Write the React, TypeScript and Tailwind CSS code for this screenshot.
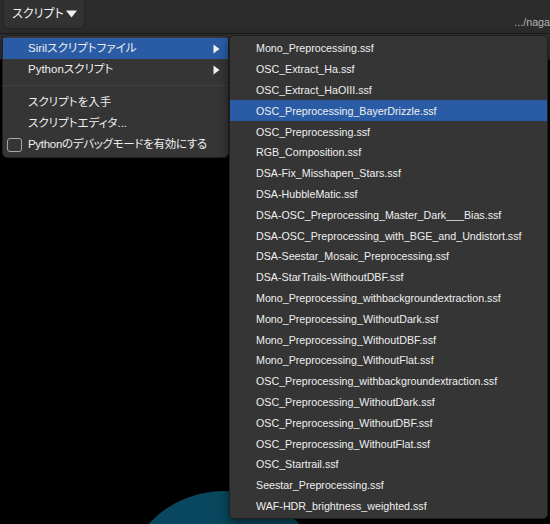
import React from "react";

const FONT = "font-['Liberation_Sans','Noto_Sans_CJK_JP',sans-serif] [font-feature-settings:'palt']";

const scripts = [
  "Mono_Preprocessing.ssf",
  "OSC_Extract_Ha.ssf",
  "OSC_Extract_HaOIII.ssf",
  "OSC_Preprocessing_BayerDrizzle.ssf",
  "OSC_Preprocessing.ssf",
  "RGB_Composition.ssf",
  "DSA-Fix_Misshapen_Stars.ssf",
  "DSA-HubbleMatic.ssf",
  "DSA-OSC_Preprocessing_Master_Dark___Bias.ssf",
  "DSA-OSC_Preprocessing_with_BGE_and_Undistort.ssf",
  "DSA-Seestar_Mosaic_Preprocessing.ssf",
  "DSA-StarTrails-WithoutDBF.ssf",
  "Mono_Preprocessing_withbackgroundextraction.ssf",
  "Mono_Preprocessing_WithoutDark.ssf",
  "Mono_Preprocessing_WithoutDBF.ssf",
  "Mono_Preprocessing_WithoutFlat.ssf",
  "OSC_Preprocessing_withbackgroundextraction.ssf",
  "OSC_Preprocessing_WithoutDark.ssf",
  "OSC_Preprocessing_WithoutDBF.ssf",
  "OSC_Preprocessing_WithoutFlat.ssf",
  "OSC_Startrail.ssf",
  "Seestar_Preprocessing.ssf",
  "WAF-HDR_brightness_weighted.ssf",
];

function SubArrow() {
  return (
    <svg width="7" height="10" viewBox="0 0 7 10" className="ml-auto mr-[8px]">
      <path d="M0.5 0.5 L6.5 5 L0.5 9.5 Z" fill="#f2f2f2" />
    </svg>
  );
}

function Row({
  label,
  active = false,
  sub = false,
}: {
  label: string;
  active?: boolean;
  sub?: boolean;
}) {
  return (
    <div
      className={`flex h-[21px] items-center pl-[25px] ${
        active ? "bg-[#2a5ca6]" : ""
      }`}
    >
      <span className="text-[#efefef]">{label}</span>
      {sub && <SubArrow />}
    </div>
  );
}

export default function App() {
  return (
    <div
      className={`relative h-[524px] w-[550px] overflow-hidden bg-black text-[11.5px] ${FONT}`}
    >
      {/* toolbar */}
      <div className="flex h-[34px] items-start border-b border-[#1c1c1c] bg-[#2c2c2c]">
        <button className="ml-[3px] flex h-[29px] items-center gap-[2px] rounded-b-[5px] border border-t-0 border-[#242424] bg-[#323232] pl-[8px] pr-[7px] text-[12px] text-[#f0f0f0]">
          <span>スクリプト</span>
          <svg width="11" height="8" viewBox="0 0 11 8">
            <path d="M0 0.5 H11 L5.5 7.5 Z" fill="#f0f0f0" />
          </svg>
        </button>
        <span className="ml-auto mt-[14px] whitespace-nowrap text-[10.7px] text-[#b4b4b4]">
          .../naga
        </span>
      </div>

      {/* secondary strip behind the menus */}
      <div className="h-[26px] border-b border-[#1c1c1c] bg-[#303030]" />

      {/* image canvas */}
      <div className="absolute left-[121px] top-[491px] h-[206px] w-[206px] rounded-full bg-[#08475d]" />

      {/* main menu */}
      <div className="absolute left-[2px] top-[35px] w-[227px] rounded-[5px] border border-[#202020] bg-[#353535] py-[2px] shadow-[0_4px_12px_rgba(0,0,0,0.5)]">
        <Row label="Sirilスクリプトファイル" active sub />
        <Row label="Pythonスクリプト" sub />
        <div className="mb-[6px] mt-[5px] h-px bg-[#414141]" />
        <Row label="スクリプトを入手" />
        <Row label="スクリプトエディタ..." />
        <div className="flex h-[21px] items-center gap-[6px] pl-[4px]">
          <span className="h-[14px] w-[15px] rounded-[3px] border-[1.5px] border-[#a8a8a8]" />
          <span className="tracking-[-0.3px] text-[#efefef]">
            Pythonのデバッグモードを有効にする
          </span>
        </div>
      </div>

      {/* submenu */}
      <div className="absolute left-[229px] top-[35px] w-[319px] rounded-[5px] border border-[#202020] bg-[#353535] py-[2px] text-[10.7px] shadow-[0_4px_12px_rgba(0,0,0,0.5)]">
        {scripts.map((s) => (
          <div
            key={s}
            className={`flex h-[20.8px] items-center whitespace-nowrap pl-[26px] text-[#efefef] ${
              s === "OSC_Preprocessing_BayerDrizzle.ssf" ? "bg-[#2a5ca6]" : ""
            }`}
          >
            {s}
          </div>
        ))}
      </div>
    </div>
  );
}
